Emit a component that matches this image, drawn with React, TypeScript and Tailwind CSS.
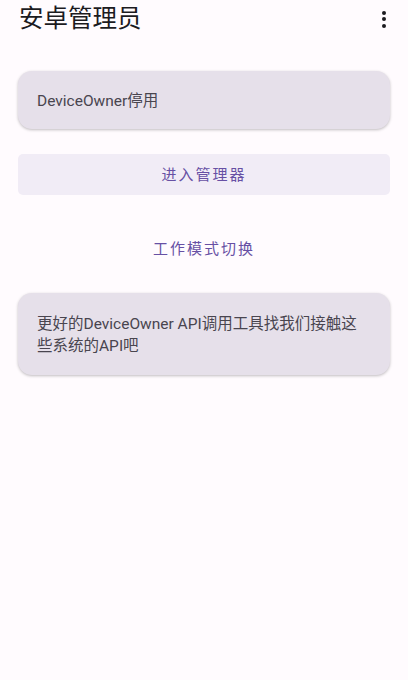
export default function App() {
  return (
    <div
      className="min-h-[680px] w-full bg-[#fffbfe] text-[#1c1b1f]"
      style={{ fontFamily: 'Roboto, "Noto Sans CJK SC", sans-serif' }}
    >
      {/* top bar */}
      <div className="flex h-[38px] items-center justify-between pl-[19px] pr-[12px]">
        <h1 className="text-[24.5px] leading-none font-normal text-[#1c1b1f]">安卓管理员</h1>
        <button className="flex h-[24px] w-[24px] flex-col items-center justify-center gap-[2.5px]">
          <span className="h-[4px] w-[4px] rounded-full bg-[#1c1b1f]" />
          <span className="h-[4px] w-[4px] rounded-full bg-[#1c1b1f]" />
          <span className="h-[4px] w-[4px] rounded-full bg-[#1c1b1f]" />
        </button>
      </div>

      <div className="flex flex-col px-[18px] pt-[33px]">
        <div className="flex h-[58px] items-center rounded-[14px] bg-[#e6e0ea] px-[19px] pt-[3px] shadow-[0_1px_3px_rgba(0,0,0,0.25)]">
          <span className="text-[15.5px] text-[#49454f]">DeviceOwner停用</span>
        </div>

        <button className="mt-[25px] flex h-[41px] items-center justify-center rounded-[5px] bg-[#f1ecf6] pt-[2px] text-[15px] tracking-[2px] text-[#6750a4]">
          进入管理器
        </button>

        <button className="mt-[33px] flex h-[41px] items-center justify-center pt-[1px] text-[15px] tracking-[2px] text-[#6750a4]">
          工作模式切换
        </button>

        <div className="mt-[24px] rounded-[14px] bg-[#e6e0ea] pt-[20px] pb-[18px] pl-[19px] pr-[22px] shadow-[0_1px_3px_rgba(0,0,0,0.25)]">
          <p className="text-[15.5px] leading-[22px] text-[#49454f]">
            更好的DeviceOwner API调用工具找我们接触这些系统的API吧
          </p>
        </div>
      </div>
    </div>
  );
}
